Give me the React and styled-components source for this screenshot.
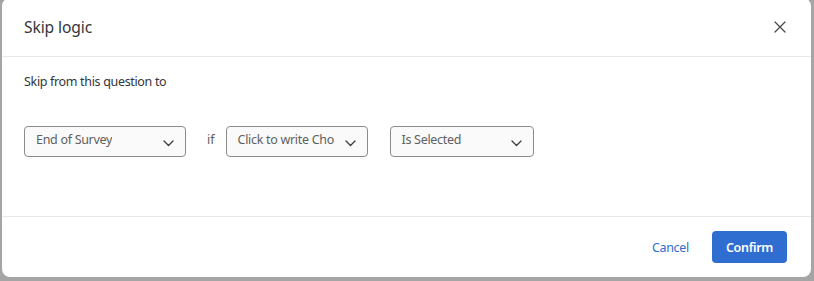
import React from "react";
import styled, { createGlobalStyle } from "styled-components";

const Global = createGlobalStyle`
  html, body { margin: 0; padding: 0; background: #a5a5a5; }
  body { font-family: "Noto Sans", "Open Sans", Arial, sans-serif; overflow: hidden; }
  #root { height: 281px; }
`;

const Backdrop = styled.div`
  height: 281px;
  padding-left: 2px;
  box-sizing: border-box;
`;

const Modal = styled.div`
  width: 809px;
  height: 279px;
  margin-top: -2px;
  background: #fff;
  border-radius: 8px;
  display: flex;
  flex-direction: column;
  color: #32363a;
`;

const Header = styled.div`
  height: 59px;
  box-sizing: border-box;
  border-bottom: 1px solid #e8e8e8;
  display: flex;
  align-items: center;
  justify-content: space-between;
  padding: 0 24px 0 22px;
`;

const Title = styled.h2`
  margin: 0;
  font-size: 15.6px;
  letter-spacing: -0.1px;
  font-weight: 400;
  color: #32363a;
`;

const CloseBtn = styled.button`
  border: 0;
  background: none;
  padding: 0;
  width: 14px;
  height: 14px;
  display: flex;
  align-items: center;
  justify-content: center;
  cursor: pointer;
`;

const Body = styled.div`
  flex: 1;
  border-bottom: 1px solid #e8e8e8;
  padding: 17px 22px 0 22px;
`;

const Prompt = styled.p`
  margin: 0;
  font-size: 12.5px;
  letter-spacing: -0.33px;
  line-height: 16px;
  color: #32363a;
`;

const Row = styled.div`
  display: flex;
  align-items: center;
  margin-top: 36px;
`;

const Select = styled.div`
  width: ${(p) => p.$w}px;
  height: 31px;
  box-sizing: border-box;
  border: 1px solid #8c8c8c;
  border-radius: 4px;
  background: #fafafa;
  display: flex;
  align-items: center;
  justify-content: space-between;
  padding: 0 11px 0 11px;
  margin-right: ${(p) => p.$mr || 0}px;
`;

const SelectText = styled.span`
  font-size: 12.5px;
  letter-spacing: -0.3px;
  color: #606060;
  white-space: nowrap;
  overflow: hidden;
  max-width: ${(p) => p.$max || 200}px;
  margin-top: -4px;
`;

const Chev = styled.svg`
  margin-top: 3px;
  flex: none;
`;

const IfLabel = styled.span`
  font-size: 12.5px;
  color: #606060;
  margin: -4px 11px 0 0;
`;

const Footer = styled.div`
  height: 60px;
  display: flex;
  align-items: center;
  justify-content: flex-end;
  padding: 0 24px 0 0;
  gap: 23px;
`;

const Cancel = styled.button`
  border: 0;
  background: none;
  font-family: inherit;
  font-size: 12.5px;
  letter-spacing: -0.3px;
  color: #2f6dcf;
  padding: 0;
  cursor: pointer;
`;

const Confirm = styled.button`
  border: 0;
  width: 75px;
  height: 32px;
  border-radius: 4px;
  background: #2f6dd1;
  color: #fff;
  font-family: inherit;
  font-size: 12.5px;
  letter-spacing: -0.3px;
  font-weight: 600;
  cursor: pointer;
`;

const Chevron = () => (
  <Chev width="11" height="7" viewBox="0 0 11 7" fill="none">
    <path d="M1 1l4.5 4.5L10 1" stroke="#3a3a3a" strokeWidth="1.3" strokeLinecap="round" strokeLinejoin="round" />
  </Chev>
);

export default function App() {
  return (
    <>
      <Global />
      <Backdrop>
        <Modal>
          <Header>
            <Title>Skip logic</Title>
            <CloseBtn aria-label="Close">
              <svg width="12" height="12" viewBox="0 0 12 12">
                <path d="M1 1l10 10M11 1L1 11" stroke="#4a4a4a" strokeWidth="1.3" strokeLinecap="round" />
              </svg>
            </CloseBtn>
          </Header>
          <Body>
            <Prompt>Skip from this question to</Prompt>
            <Row>
              <Select $w={162} $mr={21}>
                <SelectText>End of Survey</SelectText>
                <Chevron />
              </Select>
              <IfLabel>if</IfLabel>
              <Select $w={142} $mr={22}>
                <SelectText $max={96}>Click to write Choice 1</SelectText>
                <Chevron />
              </Select>
              <Select $w={144}>
                <SelectText>Is Selected</SelectText>
                <Chevron />
              </Select>
            </Row>
          </Body>
          <Footer>
            <Cancel>Cancel</Cancel>
            <Confirm>Confirm</Confirm>
          </Footer>
        </Modal>
      </Backdrop>
    </>
  );
}
